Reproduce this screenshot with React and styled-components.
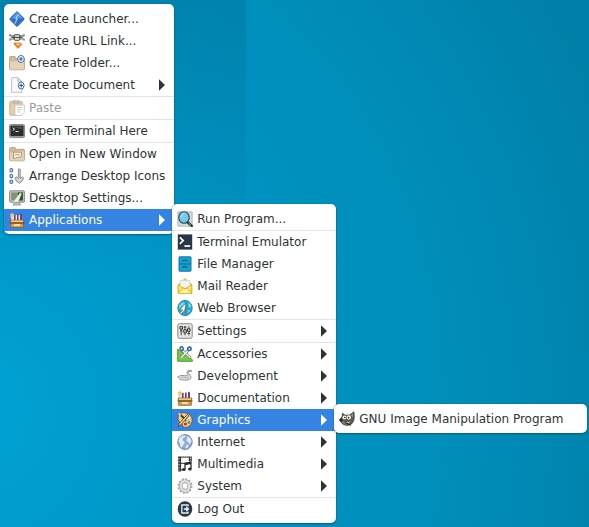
import React from "react";
import styled, { createGlobalStyle, css } from "styled-components";

const GlobalStyle = createGlobalStyle`
  * { box-sizing: border-box; }
  body { margin: 0; background: #008fbe; }
`;

const Desktop = styled.main`
  min-height: 100vh;
  padding: 4px;
  display: flex;
  align-items: flex-start;
  overflow: hidden;
  font-family: "DejaVu Sans", Verdana, sans-serif;
  font-size: 12px;
  line-height: 22px;
  color: #2e3436;
  background:
    linear-gradient(to bottom, rgba(0, 90, 125, 0.22), rgba(0, 100, 140, 0.12) 30%, rgba(0, 120, 160, 0) 52%) 0 0 / 246px 100% no-repeat,
    radial-gradient(ellipse 680px 760px at -20px 410px, #00a2d4 0%, #0098c8 28%, #0090be 56%, #008ebb 68%, #0080a9 100%);
`;

const MenuPanel = styled.ul`
  list-style: none;
  margin: 0;
  padding: 4px 0 3px;
  min-width: ${(p) => p.$minWidth}px;
  width: max-content;
  background: #fff;
  border-radius: 5px;
  box-shadow: 0 0 1px rgba(0, 50, 70, 0.6), 0 1px 2px rgba(0, 30, 50, 0.4);
  ${(p) =>
    p.$nested &&
    css`
      position: absolute;
      top: -5px;
      left: calc(100% - 2px);
      z-index: 1;
    `}
`;

const MenuEntry = styled.li`
  position: relative;
`;

const Separator = styled.li`
  height: 1px;
  background: #e4e4e4;
`;

const MenuButton = styled.button`
  display: flex;
  align-items: center;
  gap: 4px;
  width: 100%;
  height: 22px;
  margin: 0;
  padding: 0 9px 0 5px;
  border: 0;
  font: inherit;
  text-align: left;
  white-space: nowrap;
  color: ${(p) => (p.$active ? "#fff" : "inherit")};
  background: ${(p) => (p.$active ? "#3584e4" : "transparent")};

  &:disabled { color: #999c9c; }
  &:disabled svg { opacity: 0.5; }
`;

const Label = styled.span`
  flex: 1;
`;

const IconBox = styled.svg`
  flex: none;
  width: 16px;
  height: 16px;
`;

const ArrowBox = styled.svg`
  flex: none;
  width: 6px;
  height: 12px;
  fill: currentColor;
`;

const Arrow = () => (
  <ArrowBox viewBox="0 0 6 12" aria-hidden="true">
    <path d="M0 0.3 L6 6 L0 11.7Z" />
  </ArrowBox>
);

const booksAndTray = (
  <>
    <path d="M2 3h3v6H2z" fill="#e9e3dc" stroke="#b5a8a0" strokeWidth=".6" />
    <path d="M4.6 3h7.8v5.6H4.6z" fill="#f3eef5" />
    <path d="M5 8.6V3.2l1.6-.8v6.2zM8 8.6V2.6h1.6v6zM11 8.6V1.6l2 .8v6.2z" fill="#6b4274" />
    <path d="M3 .2l.8 1.5 1.6.3-1.2 1.2.2 1.7L3 4.1l-1.6.8.3-1.7L.6 2l1.7-.3z" fill="#f2c751" />
    <path d="M1 8.2h14l-.8 3H1.8z" fill="#e4b76a" stroke="#805318" strokeWidth=".8" />
    <path d="M.5 10.4h15v1.2H.5z" fill="#6d4610" />
    <path d="M1.7 11.6h12.6v3.7H1.7z" fill="#dba650" stroke="#8b5a19" strokeWidth=".8" />
    <path d="M5 12.2h6v1.5H5z" fill="#fff2c6" />
    <path d="M2 9h12" stroke="#f8d998" />
  </>
);

const folder = (
  <>
    <path d="M.6 3.5V2.2q0-.7.7-.7h4.4q.7 0 .7.7v1.1h8q1 0 1 1v9.5q0 1-1 1H1.6q-1 0-1-1z" fill="#d1ba98" stroke="#b9a17e" strokeWidth=".9" />
    <path d="M1 6.5h6l1.2-1.3h6.7v8.5q0 .7-.7.7H1.8q-.8 0-.8-.7z" fill="#e4d3b8" />
  </>
);

const plus = (x, y, rx = 3.3) => (
  <>
    <ellipse cx={x} cy={y} rx={rx} ry="3.5" fill="#fff" stroke="#3b69b0" strokeWidth="1" />
    <path d={`M${x - 1.9} ${y}h3.8M${x} ${y - 2.1}v4.2`} stroke="#2d59a0" strokeWidth="1.1" />
  </>
);

const drawings = {
  launcher: (
    <>
      <path d="M8 .6 14.8 7.2Q15.4 8 14.8 8.8L8.6 15.1Q8 15.7 7.4 15.1L1.2 8.8Q.6 8 1.2 7.2z" fill="#2f70cf" stroke="#2159b2" strokeWidth=".8" />
      <path d="M8 1.3 14 7.6Q9 6 2 8.2z" fill="#5b9bea" />
      <path d="M10 4Q7.2 4.6 7.4 8.1 7.4 11.6 5.7 12.4M6.6 7.3l2.4 1" stroke="#a8d0ff" strokeWidth="1.1" fill="none" />
    </>
  ),
  link: (
    <>
      <path d="M1 1v1.8h4L6.5 1.6h3L11 2.8h4V1M1 7.8V6h4l1.5 1.4h3L11 6h4v1.8" fill="none" stroke="#6a6e6b" strokeWidth="1.2" />
      <path d="M2.4 4.4h11.2" stroke="#4b504e" strokeWidth="1.3" />
      <path d="M5.2 2.8v3.4M10.8 2.8v3.4" stroke="#4b504e" strokeWidth="1.2" />
      <path d="M6.5 2.9h3M6.5 5.9h3" stroke="#b4b6b2" strokeWidth=".9" />
      <path d="M5 9.4h6.6v1.2H14l-5 5.2-5-5.2h1z" fill="#ee7d20" />
      <path d="M6.6 10.4h4.8L9 13z" fill="#ffd2a1" />
    </>
  ),
  folderNew: (
    <>
      {folder}
      {plus(12, 4)}
    </>
  ),
  documentNew: (
    <>
      <path d="M2.6.7h6L13 4.5v10.8H2.6z" fill="#fafafa" stroke="#b8bab8" strokeWidth=".9" />
      <path d="M8.6.8v3.7h4z" fill="#ddd" stroke="#aaa" strokeWidth=".6" />
      {plus(12.2, 8.5, 2.9)}
    </>
  ),
  paste: (
    <>
      <rect x=".7" y="1.6" width="12.7" height="13.6" rx="1" fill="#d29c4a" stroke="#94651f" strokeWidth=".9" />
      <path d="M4 .7h6v3H4z" fill="#888" stroke="#666" strokeWidth=".7" />
      <path d="M6 5h9.3v7.4l-2.7 3H6z" fill="#fff" stroke="#888" strokeWidth=".8" />
      <path d="M8 7.5h5.3M8 9.7h5.3M8 11.9h3.4" stroke="#999" />
    </>
  ),
  terminal: (
    <>
      <rect x=".5" y="1.6" width="15" height="13" rx="1" fill="#bdbfba" stroke="#858985" />
      <rect x="1.9" y="3" width="12.2" height="9.8" fill="#292f2e" stroke="#171c1a" strokeWidth=".8" />
      <path d="m3.7 4.8 2 1.4-2 1.4M6.5 8.5h3" stroke="#e1e8dd" fill="none" />
      <path d="M2.5 3.4h11v3z" fill="#fff" opacity=".18" />
    </>
  ),
  folderOpen: (
    <>
      {folder}
      <path d="M4.5 6.2h7.8v5H8l-1.3 1.1H4.5z" fill="#fff8e9" stroke="#a8906c" strokeWidth=".9" />
      <path d="M6 8.7h5" stroke="#9c835e" strokeWidth=".8" />
    </>
  ),
  arrange: (
    <>
      <g fill="#edf5ff" stroke="#4671b0" strokeWidth="1.2">
        <ellipse cx="2.3" cy="2.3" rx="1.4" ry="1.6" />
        <ellipse cx="2.3" cy="8.1" rx="1.4" ry="1.6" />
        <ellipse cx="2.3" cy="13.8" rx="1.4" ry="1.6" />
      </g>
      <path d="M9.4 1h1.8v9.4l2.2-1.6 1.2 1.4q-1.4 4.2-4.3 4.9-2.9-.7-4.3-4.9l1.2-1.4 2.2 1.6z" fill="#d3d5d3" stroke="#7f8481" strokeWidth=".9" />
    </>
  ),
  desktop: (
    <>
      <rect x=".6" y=".8" width="14.8" height="11.4" rx="1" fill="#c5c9c1" stroke="#7b807a" strokeWidth=".9" />
      <path d="M2.2 2.4h11.6v8.1H2.2z" fill="#829478" />
      <path d="M9 2.4h4.8v8.1H9z" fill="#29521d" />
      <path d="m11.4 2.6 1.1 1.5-3.4 8.1-5.2 2 1.2-3.4z" fill="#f0f2ec" stroke="#adb4a6" strokeWidth=".5" />
      <path d="M5.5 12.4h5l1 2.7H4.3z" fill="#c1c3bd" stroke="#858982" strokeWidth=".7" />
    </>
  ),
  books: booksAndTray,
  run: (
    <>
      <path d="M.8.8h14.4v14.4H.8z" fill="#d4d8dc" stroke="#a8afb5" strokeWidth=".8" />
      <path d="m10 10.7 4.7 4.2" stroke="#263943" strokeWidth="2.6" strokeLinecap="round" />
      <path d="m11.7 12.3 2 1.8" stroke="#d8c33d" strokeWidth="1" />
      <ellipse cx="7" cy="6.5" rx="5.2" ry="5.7" fill="#71cde9" stroke="#244554" strokeWidth="1.1" />
      <path d="M3.6 6.5q.4-3.5 3.8-3.8" stroke="#b5ecff" fill="none" />
    </>
  ),
  terminalFlat: (
    <>
      <path d="M.8.4h14.4v15.2H.8z" fill="#263645" />
      <path d="m2.8 3.3 3.4 3.3-3.4 3.3" fill="none" stroke="#fff" strokeWidth="1.7" />
      <path d="M7.4 11.2h5.8v1.7H7.4z" fill="#fff" />
    </>
  ),
  files: (
    <>
      <rect x="2" y=".8" width="12" height="14.4" rx=".6" fill="#0ba6d9" stroke="#1c7391" />
      <path d="M2.4 8h11.2" stroke="#08698a" />
      <path d="M6 5.4V4.4h4v1M6 11.8v-1h4v1" stroke="#123d51" fill="none" />
    </>
  ),
  mail: (
    <>
      <path d="M1.2 6.6 8 .7l6.8 5.9v8.7H1.2z" fill="#f4ce35" stroke="#d8a918" strokeWidth=".8" />
      <path d="M5.8 1.5 8 .1l2.2 1.4z" fill="#ffd51d" />
      <path d="M3 2.5h10v8H3z" fill="#f0f3f5" stroke="#c8cfd2" strokeWidth=".7" />
      <path d="M1.3 6.7 8 11l6.7-4.3v8.5H1.3z" fill="#ffe36b" stroke="#d9ad16" strokeWidth=".8" />
      <path d="m1.6 14.9 4.8-5 1.6 1.2 1.6-1.2 4.8 5" fill="#fff1a6" stroke="#d2a41a" strokeWidth=".9" />
    </>
  ),
  web: (
    <>
      <ellipse cx="8" cy="8" rx="7.2" ry="7.6" fill="#19aad6" stroke="#377b91" strokeWidth=".9" />
      <path d="M2 5.5 5.4 2 8 3 6.3 5.5 4 6.4l-2 3zM11.4 2l3 3.8-1 2.5-2.2-2zM10.5 10l3 .5-2.8 3.3z" fill="#75d7e9" />
      <path d="m8.8 3 .6 9.6-2.2-1.7-3.4 3.2-1-1.4L5.9 10l-3-.3z" fill="#fff" stroke="#4b6472" strokeWidth=".6" />
      <path d="m8.8 3 .6 9.6-2.2-1.7z" fill="#64757c" />
    </>
  ),
  settings: (
    <>
      <rect x=".8" y=".7" width="14.4" height="14.6" rx="1.7" fill="#e5e6e3" stroke="#858985" />
      <path d="M4.2 3.2v9M8 3.2v9M11.8 3.2v9" stroke="#545956" strokeWidth="1.1" />
      <path d="M3 3.6h2.5v2.5H3zM6.8 6.8h2.5v3H6.8zM10.5 5.8H13v2.5h-2.5z" fill="#eee" stroke="#292e2c" strokeWidth="1" />
      <path d="M3 8h2.5M10.5 10.5H13M6.8 4.2h2.4" stroke="#383d3a" strokeWidth="1.2" />
    </>
  ),
  accessories: (
    <>
      <path d="M.7 3v12.3h14.6v-1.6z" fill="#72ca43" stroke="#3b9c22" strokeWidth=".9" />
      <path d="M3.4 9.4v3.5h4.3z" fill="#d9f6c8" stroke="#59a840" strokeWidth=".5" />
      <path d="M5.2 4.2 13.7 12M11.4 4 4 12" stroke="#777c7b" strokeWidth="2.8" />
      <path d="M5.2 4.2 13.4 11.8M11.4 4 4.2 11.8" stroke="#edf0ec" strokeWidth="1.5" />
      <g fill="#fff" stroke="#3367b3" strokeWidth="1.6">
        <ellipse cx="4.7" cy="2.6" rx="1.5" ry="1.8" transform="rotate(-25 4.7 2.6)" />
        <ellipse cx="12.4" cy="2.8" rx="1.7" ry="1.7" />
      </g>
    </>
  ),
  development: (
    <>
      <path d="M.8 8.7q2.6-1.8 6.4-1.2 2.2.5 3.4.1 1-.4-.3-1.9Q8.8 3.4 12 2.3q2.5-.5 3 .9l-3.3.4q-1 .3.4 2 2.2 2.7 1.9 4.2-1 2.6-6.5 2.4Q1.6 11.9.8 8.7z" fill="#dedfdd" stroke="#969a96" strokeWidth="1" />
      <path d="M4 9.4q3-.8 5 .4 2 .6 3-.6" fill="none" stroke="#9da19d" strokeWidth=".8" />
    </>
  ),
  graphics: (
    <>
      <path d="M2.1 2.2Q5.4-.4 10 1.3q5 1.6 5.2 6.4.1 4.7-4 7.1-4.7 1.7-5.6-1.2-.3-2.8-2.5-3.1Q-.4 8.4 2.1 2.2z" fill="#f0cda0" stroke="#784819" strokeWidth=".8" />
      <ellipse cx="12.3" cy="6.2" rx="1.4" ry="1.6" fill="#fafafa" stroke="#a87c49" strokeWidth=".5" />
      <path d="M1 1.3 4 2l4.6 4.6-1.4 1.2-4.4-4.2z" fill="#33302c" />
      <path d="M1 1.2h2.3l1.1 2-2 .7z" fill="#ffe598" />
      <path d="m10.4 2.5 1.4 1.2-7.3 8.5-3.2 2.5.9-3.4z" fill="#f2cc6b" stroke="#4c3a24" strokeWidth=".8" />
      <circle cx="8.4" cy="12" r="1.6" fill="#d92b1b" />
      <circle cx="12" cy="10.4" r="1.5" fill="#55a936" />
      <circle cx="8.7" cy="8.4" r="1" fill="#346dbb" />
    </>
  ),
  internet: (
    <>
      <ellipse cx="8" cy="8" rx="7.2" ry="7.5" fill="#8caed8" stroke="#6682a9" strokeWidth=".9" />
      <path d="m2.4 4 2.8-2.5 3 .1-.6 2-2 1-.3 1.7 2.2 1.5-.1 2.3-1.8 1.3-.8 2.4-1.6-1.3V9.7L1.6 7.5zM10.2 2.2l3.2 2.1 1.2 3-2.1 3-1.8-2.8-1.5-.9 1.1-2zM9.5 10.5l2.3.9-1.6 2.5-1.8.4z" fill="#e6edf5" />
      <path d="M4.3 3.1q3.8-2.5 7.4 0" fill="none" stroke="#bad2ef" strokeWidth=".7" />
    </>
  ),
  multimedia: (
    <>
      <path d="M1.1.4h3v15h-3zM11.8.4h3v5.2h-3z" fill="#303634" />
      <path d="M4 1.2h8M4 7.4h7M4 13.8h1.5" stroke="#555a58" strokeWidth="1.2" />
      <path d="M2 2v1.5M2 5v1.5M2 8v1.5M2 11v1.5M2 13.7v1M13.5 1.5V3M13.5 4.5V5" stroke="#ddd" strokeWidth="1" />
      <path d="M8 13.3V7.4l6-1.1v6.5M8 8.5l6-1.1" stroke="#252a29" strokeWidth="1.3" fill="none" />
      <ellipse cx="6.8" cy="13.4" rx="1.8" ry="1.5" fill="#252a29" />
      <ellipse cx="12.9" cy="13" rx="1.8" ry="1.5" fill="#252a29" />
    </>
  ),
  system: (
    <>
      <ellipse cx="8" cy="8" rx="6.7" ry="7" fill="none" stroke="#a6a9a6" strokeWidth="1.7" strokeDasharray="2 1.6" />
      <ellipse cx="8" cy="8" rx="4.4" ry="4.8" fill="none" stroke="#929692" strokeWidth="3.6" />
      <ellipse cx="8" cy="8" rx="4.4" ry="4.8" fill="none" stroke="#e5e6e4" strokeWidth="2.3" />
      <ellipse cx="8" cy="8" rx="2.8" ry="3.2" fill="#fff" stroke="#aaa" strokeWidth=".7" />
    </>
  ),
  logout: (
    <>
      <ellipse cx="8" cy="8" rx="7.3" ry="7.7" fill="#26394a" />
      <path d="M11 5.4V4H4.8v8H11v-1.4" fill="none" stroke="#e5edf1" strokeWidth="1.3" />
      <path d="M6.8 8h4.6M9.2 6 11.4 8l-2.2 2" fill="none" stroke="#fff" strokeWidth="1.3" />
    </>
  ),
  gimp: (
    <>
      <path d="M1.2 8.5 3 5.2 3.5 2l2.8 2.2 4.5-.4L15 .7l.4 5.2q-.1 5.3-3.5 7.5-4 2-7.6.1L1.6 11z" fill="#5c5950" stroke="#34332f" strokeWidth=".6" />
      <path d="m11.7 4.2 2.3-1.7-.1 4z" fill="#97938a" />
      <ellipse cx="5.4" cy="6.5" rx="1.9" ry="2" fill="#fff" />
      <ellipse cx="9.8" cy="6.4" rx="2.2" ry="2.1" fill="#fff" />
      <circle cx="5.8" cy="6.6" r=".8" fill="#222" />
      <circle cx="9.5" cy="6.6" r=".9" fill="#222" />
      <ellipse cx="1.8" cy="8.9" rx="1.6" ry="1.3" fill="#262725" />
      <path d="M3.2 10.7q4.2 1.5 8-.4-1 3.2-4.5 3.1z" fill="#c8c3b5" />
      <path d="m5.6 11.6 6.4 2.6" stroke="#302f2b" strokeWidth="1.3" />
    </>
  ),
};

const Icon = ({ name }) => (
  <IconBox viewBox="0 0 16 16" aria-hidden="true">
    {drawings[name]}
  </IconBox>
);

const graphicsMenu = [{ icon: "gimp", label: "GNU Image Manipulation Program" }];

const applicationsMenu = [
  { icon: "run", label: "Run Program..." },
  null,
  { icon: "terminalFlat", label: "Terminal Emulator" },
  { icon: "files", label: "File Manager" },
  { icon: "mail", label: "Mail Reader" },
  { icon: "web", label: "Web Browser" },
  null,
  { icon: "settings", label: "Settings", more: true },
  null,
  { icon: "accessories", label: "Accessories", more: true },
  { icon: "development", label: "Development", more: true },
  { icon: "books", label: "Documentation", more: true },
  { icon: "graphics", label: "Graphics", more: true, items: graphicsMenu, minWidth: 253 },
  { icon: "internet", label: "Internet", more: true },
  { icon: "multimedia", label: "Multimedia", more: true },
  { icon: "system", label: "System", more: true },
  null,
  { icon: "logout", label: "Log Out" },
];

const desktopMenu = [
  { icon: "launcher", label: "Create Launcher..." },
  { icon: "link", label: "Create URL Link..." },
  { icon: "folderNew", label: "Create Folder..." },
  { icon: "documentNew", label: "Create Document", more: true },
  null,
  { icon: "paste", label: "Paste", disabled: true },
  null,
  { icon: "terminal", label: "Open Terminal Here" },
  null,
  { icon: "folderOpen", label: "Open in New Window" },
  { icon: "arrange", label: "Arrange Desktop Icons" },
  { icon: "desktop", label: "Desktop Settings..." },
  { icon: "books", label: "Applications", more: true, items: applicationsMenu, minWidth: 164 },
];

function Menu({ label, items, minWidth, nested }) {
  return (
    <MenuPanel role="menu" aria-label={label} $minWidth={minWidth} $nested={nested}>
      {items.map((item, i) =>
        item ? (
          <MenuEntry key={item.label} role="none">
            <MenuButton
              type="button"
              role="menuitem"
              disabled={item.disabled}
              aria-haspopup={item.more ? "menu" : undefined}
              aria-expanded={item.more ? Boolean(item.items) : undefined}
              $active={Boolean(item.items)}
            >
              <Icon name={item.icon} />
              <Label>{item.label}</Label>
              {item.more && <Arrow />}
            </MenuButton>
            {item.items && <Menu label={item.label} items={item.items} minWidth={item.minWidth} nested />}
          </MenuEntry>
        ) : (
          <Separator key={i} role="separator" />
        )
      )}
    </MenuPanel>
  );
}

export default function App() {
  return (
    <>
      <GlobalStyle />
      <Desktop>
        <Menu label="Desktop" items={desktopMenu} minWidth={170} />
      </Desktop>
    </>
  );
}
